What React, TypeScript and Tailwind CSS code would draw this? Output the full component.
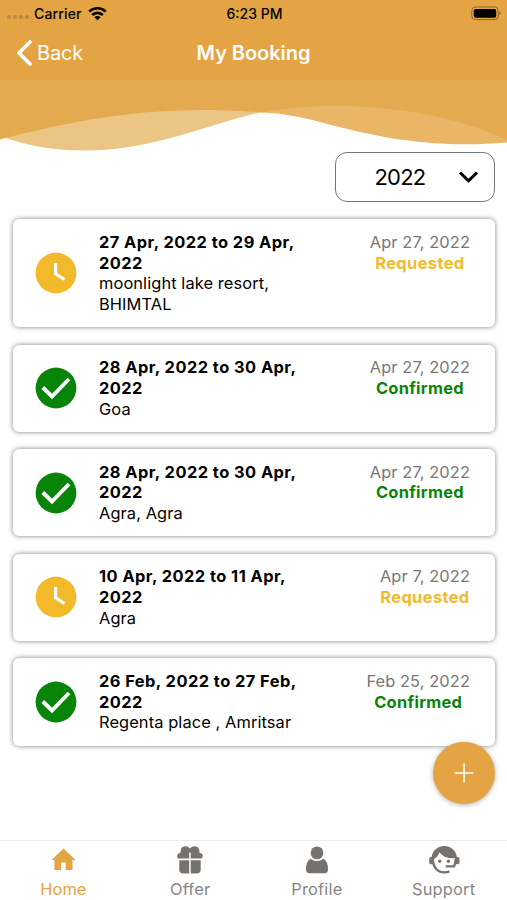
import React from 'react';

type Status = 'Requested' | 'Confirmed';

interface Booking {
  range: string;
  place: string;
  createdAt: string;
  status: Status;
}

const bookings: Booking[] = [
  { range: '27 Apr, 2022 to 29 Apr, 2022', place: 'moonlight lake resort, BHIMTAL', createdAt: 'Apr 27, 2022', status: 'Requested' },
  { range: '28 Apr, 2022 to 30 Apr, 2022', place: 'Goa', createdAt: 'Apr 27, 2022', status: 'Confirmed' },
  { range: '28 Apr, 2022 to 30 Apr, 2022', place: 'Agra, Agra', createdAt: 'Apr 27, 2022', status: 'Confirmed' },
  { range: '10 Apr, 2022 to 11 Apr, 2022', place: 'Agra', createdAt: 'Apr 7, 2022', status: 'Requested' },
  { range: '26 Feb, 2022 to 27 Feb, 2022', place: 'Regenta place , Amritsar', createdAt: 'Feb 25, 2022', status: 'Confirmed' },
];

function StatusBar() {
  return (
    <div className="grid grid-cols-3 items-center h-[26px] pl-[7px] pr-[5px] text-[14px] font-medium text-black">
      <div className="flex items-center">
        <div className="flex gap-[2px] mr-[5px] mt-2">
          {[0, 1, 2, 3].map(i => (
            <span key={i} className="w-[4px] h-[4px] rounded-full bg-[#b88a43]" />
          ))}
        </div>
        <span className="tracking-[0.15px]">Carrier</span>
        <svg className="ml-[6px]" width="19" height="15" viewBox="0 0 19 15">
          <g fill="none" stroke="#000" strokeWidth="2.6">
            <path d="M1.2 5.6C5.8 1.1 13.2 1.1 17.8 5.6" />
            <path d="M4.2 9C7.2 6.1 11.8 6.1 14.8 9" />
          </g>
          <path d="M6.4 11.2C8.2 9.6 10.8 9.6 12.6 11.2L9.5 14.3Z" />
        </svg>
      </div>
      <span className="text-center">6:23 PM</span>
      <svg className="justify-self-end" width="31" height="15" viewBox="0 0 31 15">
        <rect x="0.8" y="1" width="26.4" height="12.6" rx="3.6" fill="none" stroke="#8d682f" />
        <rect x="2.8" y="3" width="22.4" height="8.8" rx="2" />
        <path d="M28.5 5.2c1.6.7 1.6 3.5 0 4.2z" fill="#8d682f" />
      </svg>
    </div>
  );
}

function Waves() {
  return (
    <svg className="block" width="507" height="72" viewBox="0 80 507 72">
      <path d="M0 80H507V140C460 118 400 106 335 106C300 106 280 109 253 114C205 126 150 150.5 85 150.5C50 150.5 25 145 0 136Z" fill="#ebc583" />
      <path d="M253 80H507V142.500C430 149 375 136 335 126C310 119 285 113 262 112.500Z" fill="#e9b567" />
      <path d="M0 80H507V140C460 118 400 106 335 106C307 106 284 108.500 262 112.500C240 110.500 220 110 200 110C125 110 55 125 0 139.500Z" fill="#e4aa4f" />
    </svg>
  );
}

function StatusIcon({ status }: { status: Status }) {
  if (status === 'Requested') {
    return (
      <svg width="42" height="42" viewBox="0 0 42 42">
        <circle cx="21" cy="21" r="20.400" fill="#f2ba2b" />
        <path d="M20.600 11V21.800L29.500 27.500" fill="none" stroke="#fff" strokeWidth="3.200" />
      </svg>
    );
  }
  return (
    <svg width="42" height="42" viewBox="0 0 42 42">
      <circle cx="21" cy="21" r="20.400" fill="#088408" />
      <path d="M7.800 20.500L17 29.500L34 12" fill="none" stroke="#fff" strokeWidth="3.900" />
    </svg>
  );
}

function BookingCard({ booking }: { booking: Booking }) {
  return (
    <div className="flex rounded-[6px] bg-white pt-[12.5px] pb-[12.5px] pl-[22.5px] pr-[25px] text-[16.400px] leading-[20.700px] text-black shadow-[0_0_5px_rgba(0,0,0,0.5)]">
      <div className="self-center w-[64px]">
        <StatusIcon status={booking.status} />
      </div>
      <div className="w-[215px]">
        <p className="font-bold tracking-[0.460px]">{booking.range}</p>
        <p className="w-[205px] tracking-[0.100px]">{booking.place}</p>
      </div>
      <div className="ml-auto text-center">
        <p className="text-[#777] tracking-[0.100px]">{booking.createdAt}</p>
        <p className={booking.status === 'Requested' ? 'font-bold tracking-[0.400px] text-[#f2ba2b]' : 'font-bold tracking-[0.300px] text-[#088408]'}>
          {booking.status}
        </p>
      </div>
    </div>
  );
}

const tabs = [
  {
    label: 'Home',
    icon: (
      <path d="M14.500 3.500L26.600 15H23.500V25H16.700V17.500H12.100V25H5.400V15H2.500Z" />
    ),
  },
  {
    label: 'Offer',
    icon: (
      <>
        <path d="M13.200 13.600H3.500Q1.200 13.600 1.200 11Q1.200 8.200 4.500 8.100Q4.100 1.200 9.300 1.200Q12.400 1.200 14 3.400Q15.600 1.200 18.700 1.200Q23.900 1.200 23.500 8.100Q26.800 8.200 26.800 11Q26.800 13.600 24.500 13.600H14.700V7.500H13.200Z" />
        <path d="M3.300 15.200H13.200V28.400H7.300Q3.300 28.400 3.300 24.400ZM14.700 15.200H24.700V24.400Q24.700 28.400 20.700 28.400H14.700Z" />
      </>
    ),
  },
  {
    label: 'Profile',
    icon: (
      <>
        <circle cx="14" cy="7.900" r="6.400" />
        <path d="M7.600 13.800Q10.300 16 14 16Q17.700 16 20.400 13.800Q25 16.200 25 24.500Q25 28.200 21.500 28.200H6.500Q3 28.200 3 24.500Q3 16.200 7.600 13.800Z" />
      </>
    ),
  },
  {
    label: 'Support',
    icon: (
      <>
        <path d="M2.900 14C2.900 22 7.500 27.400 14.300 27.400Q17 27.400 19.400 26.400M25.700 14Q25.700 18 24 21.400H15.700" fill="none" stroke="currentColor" strokeWidth="2.400" />
        <path d="M1.500 14C1.500 6.500 7 1 14.300 1C21.600 1 27 6.500 27 14L24.500 13.200C18.500 13.500 12.800 12 9.600 7.200C8.300 10.500 6.500 12.700 3.700 14Z" />
        <rect x="-0.800" y="12" width="4.300" height="7.200" rx="1.700" />
        <rect x="25.200" y="12" width="4.300" height="7.200" rx="1.700" />
        <circle cx="9.700" cy="16.300" r="1.700" />
        <circle cx="18.400" cy="16.300" r="1.700" />
      </>
    ),
  },
];

function TabBar() {
  return (
    <nav className="grid grid-cols-4 h-[60px] border-t border-[#e9e9e9] bg-white pt-[4px]">
      {tabs.map((tab, i) => (
        <div key={tab.label} className={i === 0 ? 'flex flex-col items-center text-[#e4a443]' : 'flex flex-col items-center text-[#75726f]'}>
          <svg className="overflow-visible" width="28" height="29" viewBox="0 0 28 29" fill="currentColor">
            {tab.icon}
          </svg>
          <span className={i === 0 ? 'mt-[3px] text-[16.400px] leading-[24px] tracking-[0.100px]' : 'mt-[3px] text-[16.400px] leading-[24px] tracking-[0.200px] text-[#858585]'}>{tab.label}</span>
        </div>
      ))}
    </nav>
  );
}

export default function App() {
  return (
    <div className="relative flex flex-col w-[507px] h-[900px] overflow-hidden bg-white font-['Inter',sans-serif]">
      <header className="h-[80px] bg-[#e4a443]">
        <StatusBar />
        <div className="grid grid-cols-3 items-center h-[53px] pl-[16px] pr-[16px] text-[20px] text-white">
          <div className="flex items-center gap-[5px]">
            <svg width="16" height="26" viewBox="0 0 16 26">
              <path d="M14 2L3 13L14 24" fill="none" stroke="currentColor" strokeWidth="3.600" strokeLinecap="round" strokeLinejoin="round" />
            </svg>
            <span className="tracking-[-0.200px]">Back</span>
          </div>
          <h1 className="text-center font-semibold whitespace-nowrap tracking-[-0.050px]">My Booking</h1>
        </div>
      </header>
      <Waves />

      <div className="flex justify-end pr-3">
        <button className="flex items-center w-[160px] h-[50px] pl-[38.500px] pr-[15px] justify-between rounded-[12px] border border-[#777] bg-white text-[22px] text-black">
          <span className="tracking-[-0.800px]">2022</span>
          <svg width="22" height="14" viewBox="0 0 22 14">
            <path d="M3 2.500L11.500 10.800L20 2.500" fill="none" stroke="currentColor" strokeWidth="3" />
          </svg>
        </button>
      </div>

      <main className="flex flex-col grow gap-[17.500px] pl-[12.500px] pr-3 pt-[17.300px]">
        {bookings.map((b, i) => (
          <BookingCard key={i} booking={b} />
        ))}
      </main>

      <button className="absolute right-3 bottom-[96px] flex items-center justify-center w-[62px] h-[62px] rounded-full bg-[#e4a443] shadow-[0_1px_5px_rgba(0,0,0,0.3)]">
        <svg width="20" height="20" viewBox="0 0 20 20">
          <path d="M10 0.500V19.500M0.500 10H19.500" stroke="#fff" strokeWidth="1.600" />
        </svg>
      </button>
      <TabBar />
    </div>
  );
}
